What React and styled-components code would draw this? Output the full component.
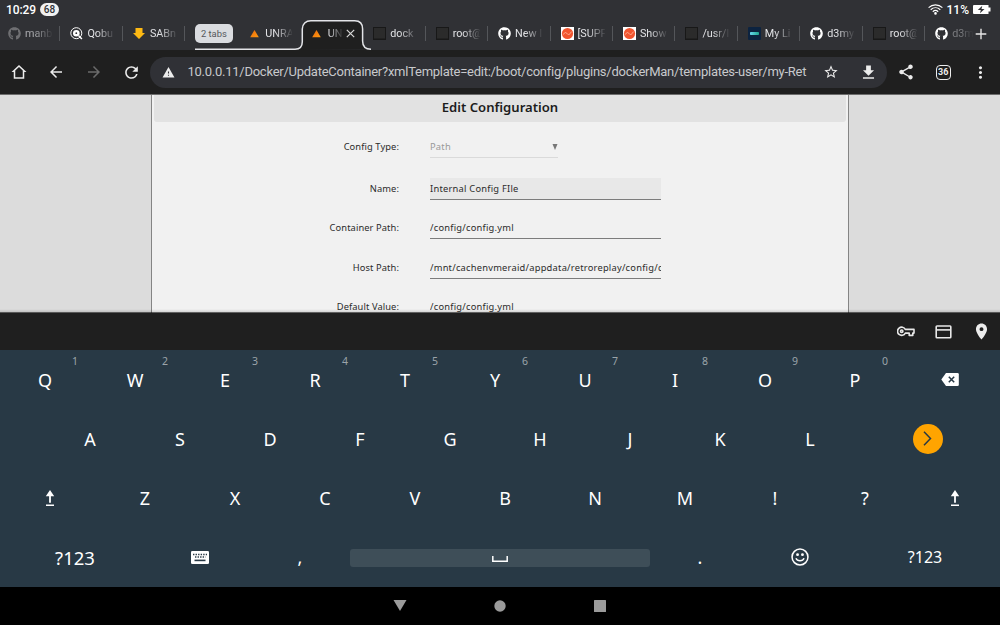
import React from 'react';
import styled, { createGlobalStyle, css } from 'styled-components';
import {
  MdArrowBack,
  MdArrowForward,
  MdFileDownload,
  MdLocationOn,
  MdMoreVert,
  MdRefresh,
  MdShare,
  MdStarBorder,
  MdWarning,
} from 'react-icons/md';
import { FaGithub } from 'react-icons/fa';

const GlobalStyle = createGlobalStyle`
  *, *::before, *::after {
    box-sizing: border-box;
  }
  body {
    margin: 0;
    overflow: hidden;
    background: #000;
  }
  svg {
    display: block;
    flex: none;
  }
`;

const Screen = styled.div`
  width: 1000px;
  height: 625px;
  display: flex;
  flex-direction: column;
  overflow: hidden;
  font-family: Roboto, sans-serif;
  color: #e8eaed;
`;

/* ---------- status bar ---------- */

const StatusBar = styled.header`
  height: 17px;
  flex: none;
  display: flex;
  align-items: center;
  padding: 2px 9px 0 6px;
  background: #303135;
  font-size: 12px;
  font-weight: 500;
  color: #fff;
`;

const Clock = styled.span`
  letter-spacing: -0.1px;
`;

const CountPill = styled.span`
  margin-left: 4px;
  height: 13px;
  width: 19px;
  border-radius: 7px;
  background: #f1f1f1;
  color: #303135;
  font-size: 10px;
  line-height: 13px;
  text-align: center;
`;

const StatusRight = styled.div`
  margin-left: auto;
  display: flex;
  align-items: center;
  gap: 4px;
`;

/* ---------- tabs ---------- */

const TabStrip = styled.nav`
  position: relative;
  height: 33px;
  flex: none;
  display: flex;
  align-items: center;
  background: #303135;
  overflow: hidden;
`;

const Tab = styled.div`
  position: relative;
  width: 62.45px;
  height: 33px;
  flex: none;
  display: flex;
  align-items: center;
  padding-left: 10px;
  margin-left: ${({ $first }) => ($first ? '-2px' : '0')};
  ${({ $line }) =>
    $line &&
    css`
      &::after {
        content: '';
        width: 1px;
        height: 15px;
        margin-left: auto;
        background: #54565a;
      }
    `}
`;

const Favicon = styled.span`
  width: 13px;
  height: 13px;
  flex: none;
  display: flex;
  align-items: center;
  justify-content: center;
  opacity: ${({ $dim }) => ($dim ? 0.3 : 1)};
`;

const TabLabel = styled.span`
  width: ${({ $w }) => $w || 27}px;
  margin-left: 4px;
  overflow: hidden;
  white-space: nowrap;
  font-size: 10.8px;
  line-height: 16px;
  color: #e2e3e6;
  opacity: ${({ $dim }) => $dim || 1};
  mask-image: linear-gradient(to right, #000 ${({ $w }) => ($w ? 0 : 35)}%, transparent 105%);
`;

const GroupSlot = styled.div`
  width: 53px;
  flex: none;
  padding-left: 9.5px;
`;

const GroupChip = styled.div`
  width: 38px;
  height: 19px;
  border-radius: 5px;
  background: #dadce0;
  color: #54565a;
  font-size: 9.4px;
  line-height: 20px;
  text-align: center;
`;

const Outline = styled.svg`
  position: absolute;
  left: 194px;
  top: 0;
`;

const NewTab = styled.button`
  position: absolute;
  right: 0;
  top: 0;
  width: 38px;
  height: 33px;
  padding: 0 0 0 13px;
  border: 0;
  background: linear-gradient(to right, rgba(48, 49, 53, 0), #303135 35%);
`;

/* ---------- toolbar ---------- */

const Toolbar = styled.div`
  height: 45px;
  flex: none;
  display: flex;
  align-items: center;
  background: #1f1f1f;
  border-bottom: 1px solid #6c6c6c;
`;

const ToolButton = styled.button`
  width: 37.5px;
  height: 32px;
  flex: none;
  display: flex;
  align-items: center;
  justify-content: center;
  border: 0;
  padding: 0;
  background: none;
  color: ${({ $off }) => ($off ? '#6b6b6b' : '#ececec')};
`;

const Omnibox = styled.div`
  width: 737px;
  height: 31px;
  flex: none;
  display: flex;
  align-items: center;
  border-radius: 16px;
  background: #303136;
`;

const Url = styled.span`
  width: 625px;
  white-space: nowrap;
  font-size: 13px;
  letter-spacing: -0.255px;
  line-height: 20px;
  color: #c8c9cc;
`;

const TabCount = styled.span`
  width: 15px;
  height: 15px;
  border: 1.5px solid #ececec;
  border-radius: 4px;
  font: 700 9px/13px Roboto, sans-serif;
  text-align: center;
`;

/* ---------- page ---------- */

const Page = styled.main`
  position: relative;
  height: 218px;
  flex: none;
  display: flex;
  justify-content: center;
  overflow: hidden;
  background: #dcdcdc;
  font-family: 'Noto Sans', sans-serif;
  color: #2b2b2b;
  &::after {
    content: '';
    position: absolute;
    inset: auto 0 0;
    height: 4px;
    background: linear-gradient(rgba(0, 0, 0, 0), rgba(0, 0, 0, 0.12) 75%, rgba(0, 0, 0, 0.6) 75%);
  }
`;

const Dialog = styled.section`
  width: 698px;
  height: 230px;
  flex: none;
  padding: 0 2px;
  background: #f1f1f1;
  border: solid #848484;
  border-width: 0 1px;
`;

const DialogTitle = styled.h1`
  height: 27px;
  margin: 0 0 14px;
  border-radius: 0 0 3px 3px;
  background: #e2e2e2;
  font-size: 13.1px;
  font-weight: 600;
  line-height: 25px;
  text-align: center;
  color: #1c1c1c;
`;

const FieldRow = styled.div`
  height: 22px;
  display: flex;
  align-items: stretch;
  margin-bottom: ${({ $gap }) => $gap || 17.4}px;
`;

const FieldLabel = styled.label`
  width: 245px;
  margin-right: 31px;
  text-align: right;
  font-size: 9.3px;
  line-height: 21px;
  letter-spacing: 0.1px;
`;

const FieldValue = styled.div`
  width: 231px;
  overflow: hidden;
  white-space: nowrap;
  border-bottom: 1px solid #7c7c7c;
  background: ${({ $focused }) => ($focused ? '#e8e8e8' : 'none')};
  font-size: 9.3px;
  line-height: 21px;
  letter-spacing: 0.24px;
`;

const FieldSelect = styled(FieldValue)`
  width: 128px;
  display: flex;
  justify-content: space-between;
  border-color: #dadada;
  color: #999;
`;

const Caret = styled.span`
  align-self: center;
  width: 0;
  height: 0;
  margin: 1px 1px 0 0;
  border-left: 2.5px solid transparent;
  border-right: 2.5px solid transparent;
  border-top: 6px solid #777;
  /* fractional borders are floored, so widen the 4px arrow to 5px */
  transform: scaleX(1.25);
`;

/* ---------- keyboard ---------- */

const AutofillBar = styled.div`
  height: 37px;
  flex: none;
  display: flex;
  align-items: center;
  justify-content: flex-end;
  background: #1f1f1f;
`;

const Keyboard = styled.div`
  height: 237px;
  flex: none;
  background: #283945;
  font-family: 'Noto Sans', sans-serif;
  color: #fff;
`;

const KeyRow = styled.div`
  height: 59.25px;
  display: flex;
  padding-left: ${({ $indent }) => $indent || 0}px;
`;

const Key = styled.div`
  position: relative;
  width: ${({ $w }) => $w || 90}px;
  flex: none;
  display: flex;
  align-items: center;
  justify-content: center;
  font-size: ${({ $size }) => $size || 18}px;
`;

const Hint = styled.span`
  position: absolute;
  left: 65px;
  top: 4px;
  width: 20px;
  text-align: center;
  font-size: 10.5px;
  line-height: 14px;
  color: #9ba4aa;
`;

const EnterKey = styled.span`
  width: 30px;
  height: 30px;
  border-radius: 50%;
  display: flex;
  align-items: center;
  justify-content: center;
  background: #ffa400;
`;

const SpaceBar = styled.span`
  width: 300px;
  height: 18px;
  margin-top: 2px;
  padding-top: 1px;
  border-radius: 3px;
  display: flex;
  align-items: center;
  justify-content: center;
  background: #3e4e58;
`;

const NavBar = styled.footer`
  height: 38px;
  flex: none;
  display: flex;
  align-items: center;
  justify-content: center;
  background: #000;
`;

const NavButton = styled.span`
  width: 100px;
  display: flex;
  justify-content: center;
`;

/* ---------- drawings ---------- */

const Triangle = () => (
  <svg width="10" height="8" viewBox="0 0 10 8">
    <defs>
      <linearGradient id="tri" x1="0" y1="0" x2="1" y2="1">
        <stop offset="0" stopColor="#e8680c" />
        <stop offset="1" stopColor="#ff9a10" />
      </linearGradient>
    </defs>
    <path d="M4.500 0 8.800 7.300H.2z" fill="url(#tri)" />
  </svg>
);

const Qobuz = () => (
  <svg width="13" height="13" viewBox="0 0 13 13" fill="none">
    <circle cx="6.3" cy="6.2" r="5.5" stroke="#fff" strokeWidth="1" />
    <circle cx="6.3" cy="6.2" r="3.3" fill="#fff" />
    <circle cx="6.3" cy="6.2" r="0.9" fill="#303135" />
    <path d="m8.700 8.700 3.200 3.400" stroke="#fff" strokeWidth="1.500" />
  </svg>
);

const Sab = () => (
  <svg width="12" height="13" viewBox="0 0 12 13">
    <path d="M2.500 1h7v5H12l-6 6-6-6h2.500z" fill="#fdb913" />
  </svg>
);

const Terminal = () => (
  <svg width="13" height="13" viewBox="0 0 13 13">
    <path d="M0 0h13v13H0z" fill="#181818" />
    <path d="M1 1h11v10.500H1z" fill="#2b2b2b" />
  </svg>
);

const Swirl = () => (
  <svg width="13" height="13" viewBox="0 0 13 13">
    <path d="M0 0h13v13H0z" fill="#fff" />
    <circle cx="6.500" cy="6.500" r="5.600" fill="#f2552f" />
    <path
      d="M2.500 7.500c1.500-3 2.600-2 3.600-.8s2.600 1.400 4.200-2"
      fill="none"
      stroke="#ffb79c"
      strokeWidth="0.900"
    />
  </svg>
);

const Library = () => (
  <svg width="13" height="13" viewBox="0 0 13 13">
    <defs>
      <linearGradient id="lib">
        <stop offset="0" stopColor="#69d6f0" />
        <stop offset="1" stopColor="#1fa88f" />
      </linearGradient>
    </defs>
    <rect width="13" height="13" rx="1" fill="#0c2340" />
    <rect x="2" y="5" width="9" height="3" rx="0.800" fill="url(#lib)" />
  </svg>
);

const Github = () => <FaGithub size={13} color="#fff" />;

const Wifi = () => (
  <svg width="15" height="11" viewBox="0 0 15 11" fill="none" stroke="#fff" strokeWidth="1.200">
    <path d="M.6 3.600c4-3.700 9.800-3.700 13.800 0M2.700 5.700c2.800-2.600 6.800-2.600 9.600 0M4.800 7.700c1.600-1.500 3.800-1.500 5.400 0" />
    <circle cx="7.500" cy="9.400" r="0.700" fill="#fff" />
  </svg>
);

const Battery = () => (
  <svg width="18" height="9" viewBox="0 0 18 9">
    <path d="M1 0h14.500v2.500H17.500v4h-2V9H1a1 1 0 0 1-1-1V1a1 1 0 0 1 1-1z" fill="#fff" />
    <path d="M9.300.8 4.800 5h3l-.8 3.200L11.500 4h-3z" fill="#303135" />
  </svg>
);

const Home = () => (
  <svg width="18" height="18" viewBox="0 0 24 24" fill="currentColor">
    <path
      fillRule="evenodd"
      d="M12 2.500 2 12h3v9h14v-9h3zM12 5.300l5 4.700v9H7v-9z"
    />
  </svg>
);

const VpnKey = () => (
  <svg width="18" height="11" viewBox="0 0 18 11" fill="none" stroke="#e8e8e8" strokeWidth="1.600">
    <path d="M8.300 3.400H17v3.700h-1.200v2.300h-3.600V7.100H8.300a4.100 4.100 0 1 1 0-3.700z" strokeLinejoin="round" />
    <circle cx="4.700" cy="5.200" r="1.200" />
  </svg>
);

const Card = () => (
  <svg width="17" height="14" viewBox="0 0 17 14" fill="none" stroke="#e8e8e8" strokeWidth="1.600">
    <rect x="1.200" y="1" width="14.600" height="11.800" rx="0.800" />
    <path d="M1 4.900h15" />
  </svg>
);

const Shift = () => (
  <svg width="10" height="17" viewBox="0 0 10 17" fill="#fff">
    <path d="M5 0 9.200 6.300H5.900v6.400H4.100V6.300H.8zM1 14.400h8v1.500H1z" />
  </svg>
);

const Backspace = () => (
  <svg width="18" height="13" viewBox="0 0 18 13">
    <path d="M5 0h11.500a1.300 1.300 0 0 1 1.300 1.300v10.400a1.300 1.300 0 0 1-1.300 1.300H5L.3 6.500z" fill="#fff" />
    <path d="m7.800 3.700 5.400 5.600m0-5.600L7.800 9.300" stroke="#283945" strokeWidth="1.500" />
  </svg>
);

const KeyboardIcon = () => (
  <svg width="18" height="13" viewBox="0 0 18 13">
    <rect width="18" height="13" rx="1.300" fill="#fff" />
    <path d="M2 3.500h14M4 6h10.500" stroke="#283945" strokeWidth="1.300" strokeDasharray="1.400 1.150" />
    <path d="M3.500 9.400h11" stroke="#283945" strokeWidth="1.600" />
  </svg>
);

const Smiley = () => (
  <svg width="18" height="18" viewBox="0 0 19 19" fill="none" stroke="#fff">
    <circle cx="9.500" cy="9.500" r="8.400" strokeWidth="1.600" />
    <circle cx="6.900" cy="7" r="1.500" fill="#fff" stroke="none" />
    <circle cx="12.100" cy="7" r="1.500" fill="#fff" stroke="none" />
    <path d="M5.200 10.800c1.400 3.500 7.200 3.500 8.600 0" strokeWidth="1.500" />
  </svg>
);

const leftTabs = [
  { label: 'manb', icon: Github, line: true, dimIcon: true, dimLabel: 0.65, first: true },
  { label: 'Qobu', icon: Qobuz, line: true },
  { label: 'SABn', icon: Sab, line: true },
];

const rightTabs = [
  { label: 'dock', icon: Terminal, line: true },
  { label: 'root@', icon: Terminal, line: true },
  { label: 'New I', icon: Github, line: true },
  { label: '[SUPP', icon: Swirl, line: true },
  { label: 'Show', icon: Swirl, line: true },
  { label: '/usr/l', icon: Terminal, line: true },
  { label: 'My Li', icon: Library, line: true },
  { label: 'd3my', icon: Github, line: true },
  { label: 'root@', icon: Terminal, line: true },
  { label: 'd3m', icon: Github, dimLabel: 0.4 },
];

const fields = [
  { label: 'Name:', value: 'Internal Config FIle', focused: true },
  { label: 'Container Path:', value: '/config/config.yml' },
  { label: 'Host Path:', value: '/mnt/cachenvmeraid/appdata/retroreplay/config/config.yml' },
  { label: 'Default Value:', value: '/config/config.yml' },
];

function BrowserTab({ label, icon: Icon, line, dimIcon, dimLabel, first }) {
  return (
    <Tab $line={line} $first={first}>
      <Favicon $dim={dimIcon}>
        <Icon />
      </Favicon>
      <TabLabel $dim={dimLabel}>{label}</TabLabel>
    </Tab>
  );
}

function Tabs() {
  return (
    <TabStrip>
      <Outline width="180" height="33" viewBox="0 0 180 33">
        <path
          d="M101 33c5 0 7.500-2.500 7.500-7.500V12c0-5 3.500-8.500 8.500-8.500h44c5 0 8 3.500 8 8.500v12c0 5 3 8.500 8 8.500z"
          fill="#1f1f1f"
        />
        <path
          d="M1 32.200h100c5 0 7.300-2.500 7.300-7.500V12c0-5 3.500-8.300 8.500-8.300h44c5 0 7.800 3.300 7.800 8.300v12c0 5 3 8.200 8.400 8.200"
          fill="none"
          stroke="#e3e4e8"
          strokeWidth="1.500"
        />
      </Outline>
      {leftTabs.map((tab) => (
        <BrowserTab key={tab.label} {...tab} />
      ))}
      <GroupSlot>
        <GroupChip>2 tabs</GroupChip>
      </GroupSlot>
      <BrowserTab label="UNRA" icon={Triangle} />
      <Tab>
        <Favicon>
          <Triangle />
        </Favicon>
        <TabLabel $w={15}>UN</TabLabel>
        <svg width="9" height="9" viewBox="0 0 9 9" style={{ marginLeft: 3 }}>
          <path d="m.8.8 7.400 7.400m0-7.400L.8 8.200" stroke="#d8d8d8" strokeWidth="1.200" />
        </svg>
      </Tab>
      {rightTabs.map((tab, i) => (
        <BrowserTab key={i} {...tab} />
      ))}
      <NewTab>
        <svg width="12" height="12" viewBox="0 0 12 12">
          <path d="M6 .7v10.600M.7 6h10.600" stroke="#e6e6e6" strokeWidth="1.400" />
        </svg>
      </NewTab>
    </TabStrip>
  );
}

export default function App() {
  return (
    <>
      <GlobalStyle />
      <Screen>
        <StatusBar>
          <Clock>10:29</Clock>
          <CountPill>68</CountPill>
          <StatusRight>
            <Wifi />
            <span>11%</span>
            <Battery />
          </StatusRight>
        </StatusBar>
        <Tabs />
        <Toolbar>
          <ToolButton>
            <Home />
          </ToolButton>
          <ToolButton>
            <MdArrowBack size={18} />
          </ToolButton>
          <ToolButton $off>
            <MdArrowForward size={18} />
          </ToolButton>
          <ToolButton>
            <MdRefresh size={19} />
          </ToolButton>
          <Omnibox>
            <ToolButton>
              <MdWarning size={13} />
            </ToolButton>
            <Url>
              10.0.0.11/Docker/UpdateContainer?xmlTemplate=edit:/boot/config/plugins/dockerMan/templates-user/my-Ret
            </Url>
            <ToolButton>
              <MdStarBorder size={16} />
            </ToolButton>
            <ToolButton>
              <MdFileDownload size={19} />
            </ToolButton>
          </Omnibox>
          <ToolButton>
            <MdShare size={18} />
          </ToolButton>
          <ToolButton>
            <TabCount>36</TabCount>
          </ToolButton>
          <ToolButton>
            <MdMoreVert size={19} />
          </ToolButton>
        </Toolbar>

        <Page>
          <Dialog>
            <DialogTitle>Edit Configuration</DialogTitle>
            <FieldRow $gap={20}>
              <FieldLabel>Config Type:</FieldLabel>
              <FieldSelect>
                Path
                <Caret />
              </FieldSelect>
            </FieldRow>
            {fields.map(({ label, value, focused }) => (
              <FieldRow key={label}>
                <FieldLabel>{label}</FieldLabel>
                <FieldValue $focused={focused}>{value}</FieldValue>
              </FieldRow>
            ))}
          </Dialog>
        </Page>

        <AutofillBar>
          <ToolButton>
            <VpnKey />
          </ToolButton>
          <ToolButton>
            <Card />
          </ToolButton>
          <ToolButton>
            <MdLocationOn size={19} />
          </ToolButton>
        </AutofillBar>

        <Keyboard>
          <KeyRow>
            {[...'QWERTYUIOP'].map((letter, i) => (
              <Key key={letter}>
                {letter}
                <Hint>{(i + 1) % 10}</Hint>
              </Key>
            ))}
            <Key $w={100}>
              <Backspace />
            </Key>
          </KeyRow>
          <KeyRow $indent={45}>
            {[...'ASDFGHJKL'].map((letter) => (
              <Key key={letter}>{letter}</Key>
            ))}
            <Key $w={145}>
              <EnterKey>
                <svg width="9" height="15" viewBox="0 0 9 15" fill="none">
                  <path d="m1 .8 6.500 6.700L1 14.200" stroke="#283945" strokeWidth="1.500" />
                </svg>
              </EnterKey>
            </Key>
          </KeyRow>
          <KeyRow>
            <Key $w={100}>
              <Shift />
            </Key>
            {[...'ZXCVBNM!?'].map((letter) => (
              <Key key={letter}>{letter}</Key>
            ))}
            <Key>
              <Shift />
            </Key>
          </KeyRow>
          <KeyRow>
            <Key $w={150} $size={18.5}>
              ?123
            </Key>
            <Key $w={100}>
              <KeyboardIcon />
            </Key>
            <Key $w={100}>,</Key>
            <Key $w={300}>
              <SpaceBar>
                <svg width="16" height="6" viewBox="0 0 16 6" fill="none">
                  <path d="M.8 0v5.200h14.400V0" stroke="#fff" strokeWidth="1.500" />
                </svg>
              </SpaceBar>
            </Key>
            <Key $w={100}>.</Key>
            <Key $w={100}>
              <Smiley />
            </Key>
            <Key $w={150} $size={16}>
              ?123
            </Key>
          </KeyRow>
        </Keyboard>

        <NavBar>
          <NavButton>
            <svg width="14" height="12" viewBox="0 0 14 12">
              <path d="M.5 0h13L7 11z" fill="#9b9b9b" />
            </svg>
          </NavButton>
          <NavButton>
            <svg width="12" height="12" viewBox="0 0 12 12">
              <circle cx="6" cy="6" r="5.700" fill="#9b9b9b" />
            </svg>
          </NavButton>
          <NavButton>
            <svg width="12" height="12" viewBox="0 0 12 12">
              <rect width="12" height="12" rx="0.500" fill="#9b9b9b" />
            </svg>
          </NavButton>
        </NavBar>
      </Screen>
    </>
  );
}
